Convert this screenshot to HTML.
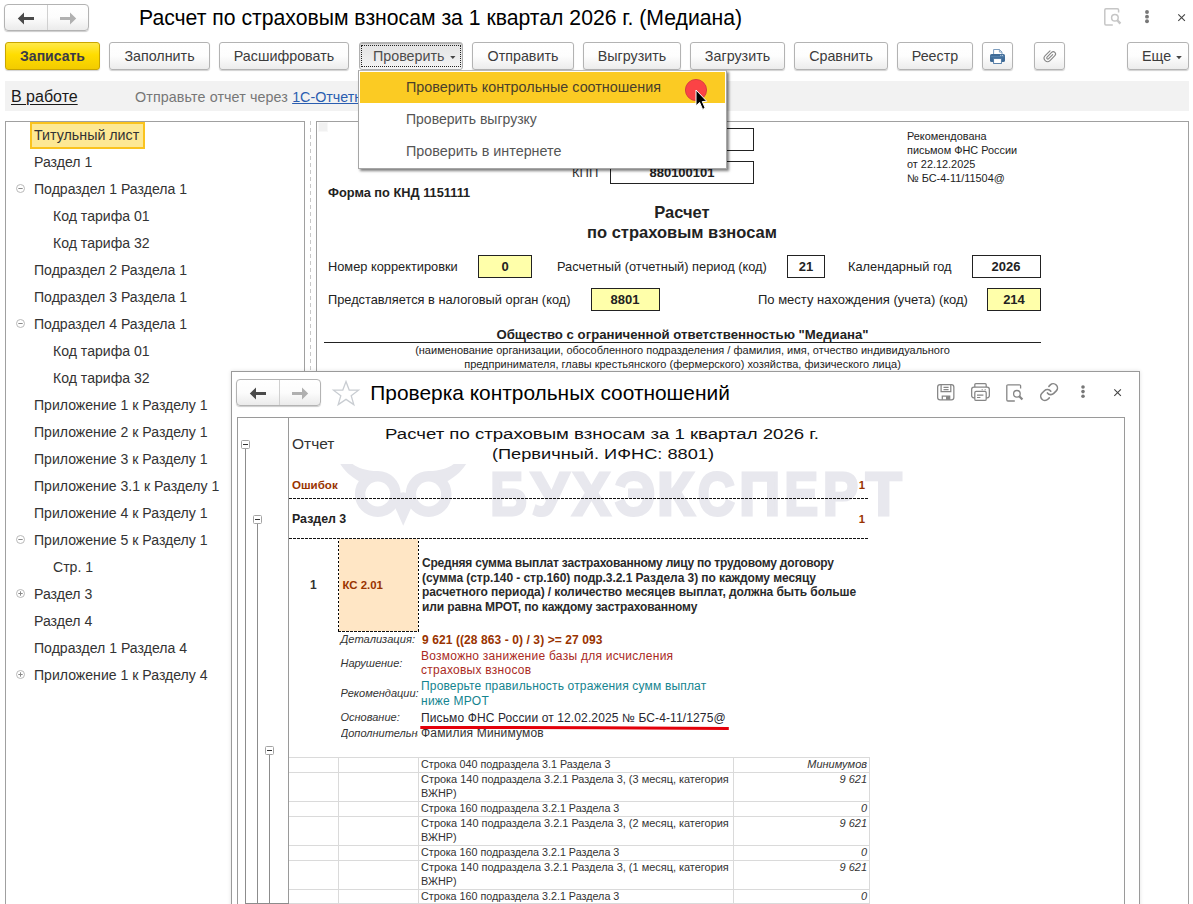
<!DOCTYPE html><html><head><meta charset="utf-8"><title>1C</title><style>
*{box-sizing:border-box;margin:0;padding:0}
html,body{width:1193px;height:904px;overflow:hidden;background:#fff}
body{font-family:"Liberation Sans",sans-serif;position:relative;color:#333}
.t{position:absolute;white-space:nowrap}
.btn{position:absolute;border:1px solid #b3b3b3;border-radius:3px;background:linear-gradient(#ffffff 0%,#fdfdfd 50%,#ececec 100%);box-shadow:0 1px 1px rgba(0,0,0,.18)}
.btn span{position:absolute;left:0;right:0;text-align:center;white-space:nowrap;font-size:14.3px;color:#3c3c3c}
svg{position:absolute;overflow:visible}
</style></head><body>
<div style="position:absolute;left:4px;top:4px;width:85px;height:27px;border:1px solid #b3b3b3;border-radius:4px;background:linear-gradient(#fff 0%,#fcfcfc 50%,#ebebeb 100%);box-shadow:0 1px 1px rgba(0,0,0,.2);"></div>
<div style="position:absolute;left:47px;top:5px;width:1px;height:25px;background:#d0d0d0;"></div>
<svg style="left:17px;top:11.6px" width="18" height="13" viewBox="0 0 18 13"><path d="M7 0.5 L0.8 6.5 L7 12.5 L7 8 L17 8 L17 5 L7 5 Z" fill="#4a4a4a"/></svg>
<svg style="left:59px;top:11.6px" width="18" height="13" viewBox="0 0 18 13"><path d="M11 0.5 L17.2 6.5 L11 12.5 L11 8 L1 8 L1 5 L11 5 Z" fill="#b0b0b0"/></svg>
<div class="t" style="top:3.65px;font-size:21.2px;line-height:28px;color:#000;left:139px;">Расчет по страховым взносам за 1 квартал 2026 г. (Медиана)</div>
<svg style="left:1104px;top:8.1px" width="18" height="18" viewBox="0 0 18 18" fill="none" stroke="#c6c6c6" stroke-width="1.5"><path d="M14.6 4.4 V2 Q14.6 0.8 13.4 0.8 H2 Q0.8 0.8 0.8 2 V15.8 Q0.8 17 2 17 H8.8"/><circle cx="10.9" cy="9.8" r="3.3"/><path d="M13.3 12.3 L16.4 15.6" stroke-width="2.4"/></svg>
<svg style="left:1143.9px;top:9.2px" width="6" height="16" viewBox="0 0 6 16" fill="#777"><circle cx="3" cy="3" r="1.95"/><circle cx="3" cy="7.65" r="1.95"/><circle cx="3" cy="12.3" r="1.95"/></svg>
<svg style="left:1177.9px;top:14.000000000000002px" width="7.2" height="7.2" viewBox="0 0 7.2 7.2" stroke="#444" stroke-width="1.1"><path d="M0.3 0.3 L6.9 6.9 M6.9 0.3 L0.3 6.9"/></svg>
<div class="btn" style="left:5px;top:42px;width:95px;height:28px;background:linear-gradient(#ffe94a 0%,#ffdd00 45%,#f2cb00 100%);border-color:#c9a500;"><span style="top:5px;line-height:17px;font-weight:bold;font-size:14px;color:#3a3a48;">Записать</span></div>
<div class="btn" style="left:109px;top:42px;width:101px;height:28px;"><span style="top:5px;line-height:17px;">Заполнить</span></div>
<div class="btn" style="left:219px;top:42px;width:130px;height:28px;"><span style="top:5px;line-height:17px;">Расшифровать</span></div>
<div class="btn" style="left:359px;top:42px;width:104px;height:28px;background:linear-gradient(#e2e2e2,#f4f4f4);border-color:#b0b0b0;box-shadow:inset 0 1px 1px rgba(0,0,0,.22)"><div style="position:absolute;left:1px;top:2px;right:1px;bottom:2px;border:1px dotted #222"></div><span style="top:5px;line-height:17px;left:13px;right:auto;text-align:left;color:#4d4d4d">Проверить</span></div>
<svg style="left:450.2px;top:56px" width="5.6" height="3" viewBox="0 0 7 4"><path d="M0 0 H7 L3.5 4 Z" fill="#444"/></svg>
<div class="btn" style="left:472px;top:42px;width:102px;height:28px;"><span style="top:5px;line-height:17px;">Отправить</span></div>
<div class="btn" style="left:583px;top:42px;width:98px;height:28px;"><span style="top:5px;line-height:17px;">Выгрузить</span></div>
<div class="btn" style="left:690px;top:42px;width:95px;height:28px;"><span style="top:5px;line-height:17px;">Загрузить</span></div>
<div class="btn" style="left:794px;top:42px;width:94px;height:28px;"><span style="top:5px;line-height:17px;">Сравнить</span></div>
<div class="btn" style="left:897px;top:42px;width:76px;height:28px;"><span style="top:5px;line-height:17px;">Реестр</span></div>
<div class="btn" style="left:982px;top:42px;width:31px;height:28px;"></div>
<div class="btn" style="left:1034px;top:42px;width:31px;height:28px;"></div>
<div class="btn" style="left:1127px;top:42px;width:62px;height:28px"><span style="top:5px;line-height:17px;left:14px;right:auto;text-align:left">Еще</span></div>
<svg style="left:1176px;top:55.5px" width="6" height="3.2" viewBox="0 0 7 4"><path d="M0 0 H7 L3.5 4 Z" fill="#444"/></svg>
<svg style="left:990px;top:49px" width="15" height="15" viewBox="0 0 15 15"><path d="M3.6 5.5 V0.5 H9.4 L12 3.1 V5.5 Z" fill="#fff" stroke="#6f93b8" stroke-width="0.9"/><path d="M9.4 0.5 V3.1 H12" fill="none" stroke="#6f93b8" stroke-width="0.8"/><rect x="0" y="5" width="15" height="8" rx="1.6" fill="#3f6b97"/><rect x="0.6" y="7.3" width="13.8" height="0.9" fill="#5c88b4"/><rect x="3.6" y="9.6" width="7.8" height="4.9" fill="#fff" stroke="#4a76a2" stroke-width="0.9"/><rect x="10.3" y="5.9" width="1" height="1" fill="#c9d9ea"/><rect x="12.1" y="5.9" width="1" height="1" fill="#c9d9ea"/></svg>
<svg style="left:1041px;top:47px" width="18" height="18" viewBox="0 0 18 18" fill="none" stroke="#868686" stroke-width="1.45" stroke-linecap="round"><g transform="translate(8.6 9.1) rotate(45) scale(-0.76 0.76) translate(-6 -8.25)"><path d="M4.5 4 V11.5 a1.5 1.5 0 0 0 3 0 V3 a3 3 0 0 0 -6 0 V12 a4.5 4.5 0 0 0 9 0 V3"/></g></svg>
<div style="position:absolute;left:5px;top:81px;width:1184px;height:30px;background:#f2f2f2;"></div>
<div class="t" style="top:85.96px;font-size:16px;line-height:21px;color:#1a1a1a;left:11px;text-decoration:underline;text-underline-offset:2px;">В работе</div>
<div class="t" style="top:87.55px;font-size:14.3px;line-height:19px;color:#777;letter-spacing:0.11px;left:135px;">Отправьте отчет через <span style="color:#2a5db0;text-decoration:underline;letter-spacing:0">1С-Отчетность</span></div>
<div style="position:absolute;left:5px;top:121px;width:300px;height:800px;border:1px solid #a0a0a0;background:#fff;"></div>
<div style="position:absolute;left:30px;top:122px;width:115px;height:27px;background:#fde894;border:2px solid #fac31e;"></div>
<div class="t" style="top:125.56px;font-size:14.25px;line-height:19px;color:#333;left:34px;">Титульный лист</div>
<div class="t" style="top:153.12px;font-size:14.08px;line-height:18px;color:#333;left:34px;">Раздел 1</div>
<div class="t" style="top:180.12px;font-size:14.08px;line-height:18px;color:#333;left:34px;">Подраздел 1 Раздела 1</div>
<svg style="left:16px;top:184.0px" width="9" height="9" viewBox="0 0 9 9" fill="none"><circle cx="4.5" cy="4.5" r="4" stroke="#b9b9b9" stroke-width="1"/><path d="M2.3 4.5 H6.7" stroke="#8a8a8a" stroke-width="1"/></svg>
<div class="t" style="top:207.12px;font-size:14.08px;line-height:18px;color:#333;left:53px;">Код тарифа 01</div>
<div class="t" style="top:234.12px;font-size:14.08px;line-height:18px;color:#333;left:53px;">Код тарифа 32</div>
<div class="t" style="top:261.12px;font-size:14.08px;line-height:18px;color:#333;left:34px;">Подраздел 2 Раздела 1</div>
<div class="t" style="top:288.12px;font-size:14.08px;line-height:18px;color:#333;left:34px;">Подраздел 3 Раздела 1</div>
<div class="t" style="top:315.12px;font-size:14.08px;line-height:18px;color:#333;left:34px;">Подраздел 4 Раздела 1</div>
<svg style="left:16px;top:319.0px" width="9" height="9" viewBox="0 0 9 9" fill="none"><circle cx="4.5" cy="4.5" r="4" stroke="#b9b9b9" stroke-width="1"/><path d="M2.3 4.5 H6.7" stroke="#8a8a8a" stroke-width="1"/></svg>
<div class="t" style="top:342.12px;font-size:14.08px;line-height:18px;color:#333;left:53px;">Код тарифа 01</div>
<div class="t" style="top:369.12px;font-size:14.08px;line-height:18px;color:#333;left:53px;">Код тарифа 32</div>
<div class="t" style="top:396.12px;font-size:14.08px;line-height:18px;color:#333;left:34px;">Приложение 1 к Разделу 1</div>
<div class="t" style="top:423.12px;font-size:14.08px;line-height:18px;color:#333;left:34px;">Приложение 2 к Разделу 1</div>
<div class="t" style="top:450.12px;font-size:14.08px;line-height:18px;color:#333;left:34px;">Приложение 3 к Разделу 1</div>
<div class="t" style="top:477.12px;font-size:14.08px;line-height:18px;color:#333;left:34px;">Приложение 3.1 к Разделу 1</div>
<div class="t" style="top:504.12px;font-size:14.08px;line-height:18px;color:#333;left:34px;">Приложение 4 к Разделу 1</div>
<div class="t" style="top:531.12px;font-size:14.08px;line-height:18px;color:#333;left:34px;">Приложение 5 к Разделу 1</div>
<svg style="left:16px;top:535.0px" width="9" height="9" viewBox="0 0 9 9" fill="none"><circle cx="4.5" cy="4.5" r="4" stroke="#b9b9b9" stroke-width="1"/><path d="M2.3 4.5 H6.7" stroke="#8a8a8a" stroke-width="1"/></svg>
<div class="t" style="top:558.12px;font-size:14.08px;line-height:18px;color:#333;left:53px;">Стр. 1</div>
<div class="t" style="top:585.12px;font-size:14.08px;line-height:18px;color:#333;left:34px;">Раздел 3</div>
<svg style="left:16px;top:589.0px" width="9" height="9" viewBox="0 0 9 9" fill="none"><circle cx="4.5" cy="4.5" r="4" stroke="#b9b9b9" stroke-width="1"/><path d="M2.3 4.5 H6.7 M4.5 2.3 V6.7" stroke="#8a8a8a" stroke-width="1"/></svg>
<div class="t" style="top:612.12px;font-size:14.08px;line-height:18px;color:#333;left:34px;">Раздел 4</div>
<div class="t" style="top:639.12px;font-size:14.08px;line-height:18px;color:#333;left:34px;">Подраздел 1 Раздела 4</div>
<div class="t" style="top:666.12px;font-size:14.08px;line-height:18px;color:#333;left:34px;">Приложение 1 к Разделу 4</div>
<svg style="left:16px;top:670.0px" width="9" height="9" viewBox="0 0 9 9" fill="none"><circle cx="4.5" cy="4.5" r="4" stroke="#b9b9b9" stroke-width="1"/><path d="M2.3 4.5 H6.7 M4.5 2.3 V6.7" stroke="#8a8a8a" stroke-width="1"/></svg>
<div style="position:absolute;left:310px;top:121px;width:1px;height:800px;background:repeating-linear-gradient(#c8c8c8 0 4px,#fff 4px 7px);"></div>
<div style="position:absolute;left:316px;top:121px;width:873px;height:800px;border:1px solid #a0a0a0;background:#fff;"></div>
<div style="position:absolute;left:318px;top:122px;width:10px;height:10px;background:#f1f1f1;border:1px solid #f8f8f8;"></div>
<div style="position:absolute;left:600px;top:128px;width:154px;height:23px;border:1px solid #222;"></div>
<div style="position:absolute;left:610px;top:161px;width:144px;height:23px;border:1px solid #222;"></div>
<div class="t" style="top:164.00px;font-size:13px;line-height:17px;color:#333;left:572px;">КПП</div>
<div class="t" style="top:164.00px;font-size:13px;line-height:17px;color:#222;font-weight:bold;left:182px;width:1000px;text-align:center;">880100101</div>
<div class="t" style="top:129.22px;font-size:10.9px;line-height:14px;color:#222;left:907px;">Рекомендована</div>
<div class="t" style="top:143.22px;font-size:10.9px;line-height:14px;color:#222;left:907px;">письмом ФНС России</div>
<div class="t" style="top:157.22px;font-size:10.9px;line-height:14px;color:#222;left:907px;">от 22.12.2025</div>
<div class="t" style="top:171.22px;font-size:10.9px;line-height:14px;color:#222;left:907px;">№ БС-4-11/11504@</div>
<div class="t" style="top:183.56px;font-size:12.8px;line-height:17px;color:#222;font-weight:bold;left:328px;">Форма по КНД 1151111</div>
<div class="t" style="top:201.78px;font-size:16.5px;line-height:21px;color:#222;font-weight:bold;left:182px;width:1000px;text-align:center;">Расчет</div>
<div class="t" style="top:221.78px;font-size:16.5px;line-height:21px;color:#222;font-weight:bold;left:182px;width:1000px;text-align:center;">по страховым взносам</div>
<div class="t" style="top:258.06px;font-size:12.8px;line-height:17px;color:#222;left:328px;">Номер корректировки</div>
<div style="position:absolute;left:478px;top:255px;width:54px;height:23px;border:1px solid #222;background:#ffffaa;"></div>
<div class="t" style="top:258.00px;font-size:13px;line-height:17px;color:#222;font-weight:bold;left:5px;width:1000px;text-align:center;">0</div>
<div class="t" style="top:258.06px;font-size:12.8px;line-height:17px;color:#222;left:557px;">Расчетный (отчетный) период (код)</div>
<div style="position:absolute;left:787px;top:255px;width:38px;height:23px;border:1px solid #222;"></div>
<div class="t" style="top:258.00px;font-size:13px;line-height:17px;color:#222;font-weight:bold;left:306px;width:1000px;text-align:center;">21</div>
<div class="t" style="top:258.06px;font-size:12.8px;line-height:17px;color:#222;left:848px;">Календарный год</div>
<div style="position:absolute;left:972px;top:255px;width:69px;height:23px;border:1px solid #222;"></div>
<div class="t" style="top:258.00px;font-size:13px;line-height:17px;color:#222;font-weight:bold;left:506px;width:1000px;text-align:center;">2026</div>
<div class="t" style="top:291.06px;font-size:12.8px;line-height:17px;color:#222;left:328px;">Представляется в налоговый орган (код)</div>
<div style="position:absolute;left:591px;top:288px;width:69px;height:23px;border:1px solid #222;background:#ffffaa;"></div>
<div class="t" style="top:291.00px;font-size:13px;line-height:17px;color:#222;font-weight:bold;left:125px;width:1000px;text-align:center;">8801</div>
<div class="t" style="top:291.00px;font-size:13.0px;line-height:17px;color:#222;left:758px;">По месту нахождения (учета) (код)</div>
<div style="position:absolute;left:987px;top:288px;width:54px;height:23px;border:1px solid #222;background:#ffffaa;"></div>
<div class="t" style="top:291.00px;font-size:13px;line-height:17px;color:#222;font-weight:bold;left:514px;width:1000px;text-align:center;">214</div>
<div class="t" style="top:325.93px;font-size:13.2px;line-height:17px;color:#222;font-weight:bold;left:182.5px;width:1000px;text-align:center;">Общество с ограниченной ответственностью "Медиана"</div>
<div style="position:absolute;left:324px;top:342px;width:717px;height:1px;background:#222;"></div>
<div class="t" style="top:343.19px;font-size:11px;line-height:14px;color:#222;left:182.5px;width:1000px;text-align:center;">(наименование организации, обособленного подразделения / фамилия, имя, отчество индивидуального</div>
<div class="t" style="top:357.19px;font-size:11px;line-height:14px;color:#222;left:182.5px;width:1000px;text-align:center;">предпринимателя, главы крестьянского (фермерского) хозяйства, физического лица)</div>
<div style="position:absolute;left:231px;top:371px;width:909px;height:560px;border:1px solid #9a9a9a;background:#fff;box-shadow:0 0 4px rgba(0,0,0,.12);"></div>
<div style="position:absolute;left:236px;top:379px;width:85px;height:27px;border:1px solid #b3b3b3;border-radius:4px;background:linear-gradient(#fff 0%,#fcfcfc 50%,#ebebeb 100%);box-shadow:0 1px 1px rgba(0,0,0,.2);"></div>
<div style="position:absolute;left:279px;top:380px;width:1px;height:25px;background:#d0d0d0;"></div>
<svg style="left:249px;top:386.6px" width="18" height="13" viewBox="0 0 18 13"><path d="M7 0.5 L0.8 6.5 L7 12.5 L7 8 L17 8 L17 5 L7 5 Z" fill="#4a4a4a"/></svg>
<svg style="left:291px;top:386.6px" width="18" height="13" viewBox="0 0 18 13"><path d="M11 0.5 L17.2 6.5 L11 12.5 L11 8 L1 8 L1 5 L11 5 Z" fill="#b0b0b0"/></svg>
<svg style="left:332px;top:380px" width="28" height="26" viewBox="0 0 28 26" fill="none" stroke="#c9cdd2" stroke-width="1.3" stroke-linejoin="miter"><path d="M14 1.5 L17.2 10 L26.5 10.2 L19.2 15.8 L21.8 24.6 L14 19.4 L6.2 24.6 L8.8 15.8 L1.5 10.2 L10.8 10 Z"/></svg>
<div class="t" style="top:379.26px;font-size:20.9px;line-height:27px;color:#000;left:370.3px;">Проверка контрольных соотношений</div>
<svg style="left:937px;top:383.8px" width="17.5" height="16.6" viewBox="0 0 17.5 16.6" fill="none" stroke="#868686" stroke-width="1.25"><rect x="0.65" y="0.65" width="16.2" height="15.2" rx="2.4"/><path d="M4.1 0.65 V7.6 H13.8 V0.65 M6.5 3.4 H11.6 M6.5 5.6 H11.6" /><path d="M5.3 15.85 V12.2 H12.7 V15.85"/><rect x="9" y="12.2" width="3.7" height="3.6" fill="#868686" stroke="none"/></svg>
<svg style="left:971.4px;top:382.9px" width="19" height="18.2" viewBox="0 0 19 18.2" fill="none" stroke="#868686" stroke-width="1.25"><path d="M3.8 4.2 V1.7 Q3.8 0.65 4.8 0.65 H14.2 Q15.2 0.65 15.2 1.7 V4.2"/><rect x="0.65" y="4.2" width="17.7" height="10.6" rx="2.2"/><rect x="3.8" y="8.5" width="11.4" height="9" rx="1.3" fill="#fff"/><path d="M6 12.1 H12.4 M6 14.5 H9.4 M10.6 6.7 H11.8 M13.6 6.7 H14.8" stroke-width="1.1"/></svg>
<svg style="left:1005.8px;top:383.6px" width="18" height="18" viewBox="0 0 18 18" fill="none" stroke="#868686" stroke-width="1.3"><path d="M14.6 4.4 V2 Q14.6 0.8 13.4 0.8 H2 Q0.8 0.8 0.8 2 V15.8 Q0.8 17 2 17 H8.8"/><circle cx="10.9" cy="9.8" r="3.3"/><path d="M13.3 12.3 L16.4 15.6" stroke-width="2.2"/></svg>
<svg style="left:1039px;top:381.6px" width="20.2" height="20.2" viewBox="0 0 24 24" fill="none" stroke="#868686" stroke-width="1.85" stroke-linecap="round" stroke-linejoin="round"><path d="M10 13a5 5 0 0 0 7.54.54l3-3a5 5 0 0 0-7.07-7.07l-1.72 1.71"/><path d="M14 11a5 5 0 0 0-7.54-.54l-3 3a5 5 0 0 0 7.07 7.07l1.71-1.71"/></svg>
<svg style="left:1079.5px;top:383.9px" width="6" height="16" viewBox="0 0 6 16" fill="#777"><circle cx="3" cy="3" r="1.8"/><circle cx="3" cy="7.6" r="1.8"/><circle cx="3" cy="12.2" r="1.8"/></svg>
<svg style="left:1113.9px;top:389.0px" width="7.2" height="7.2" viewBox="0 0 7.2 7.2" stroke="#444" stroke-width="1.1"><path d="M0.3 0.3 L6.9 6.9 M6.9 0.3 L0.3 6.9"/></svg>
<div style="position:absolute;left:237px;top:417px;width:888px;height:520px;border:1px solid #9a9a9a;background:#fff;"></div>
<div style="position:absolute;left:288px;top:418px;width:1px;height:520px;background:#9a9a9a;"></div>
<svg style="left:336px;top:460px" width="135" height="70" viewBox="336 460 135 70"><g fill="none" stroke="#e8e8ee" stroke-width="10.4"><circle cx="377.8" cy="494" r="17.7"/><circle cx="428.6" cy="494" r="17.7"/></g><g fill="#e8e8ee"><path d="M340.3 464 L352.6 464 C358 468 366 471 378 471.1 L378 477 L358.5 481 C350 476 344 470 340.3 464 Z"/><path d="M466.1 464 L453.8 464 C448.4 468 440.4 471 428.4 471.1 L428.4 477 L447.9 481 C456.4 476 462.4 470 466.1 464 Z"/><path d="M397 493.6 L403.2 492.3 L409.4 493.6 L412.4 505 L403.2 525.8 L394 505 Z"/></g></svg>
<svg style="left:480px;top:460px" width="440" height="70" viewBox="480 460 440 70"><g font-family="Liberation Sans" font-weight="bold" font-size="60" fill="#e8e8ee" stroke="#e8e8ee" stroke-width="3.0" stroke-linejoin="miter"><text transform="translate(492.40 514.87) scale(0.8500 1.0181) translate(-2.50 0)">Б</text><text transform="translate(530.20 514.87) scale(0.9926 1.0181) translate(1.40 0)">У</text><text transform="translate(571.60 514.87) scale(0.9451 1.0181) translate(0.90 0)">Х</text><text transform="translate(615.10 514.87) scale(0.9423 1.0181) translate(-0.10 0)">Э</text><text transform="translate(659.60 514.87) scale(1.0112 1.0181) translate(-2.50 0)">К</text><text transform="translate(698.50 514.87) scale(0.8555 1.0181) translate(-1.00 0)">С</text><text transform="translate(741.60 514.87) scale(0.9475 1.0181) translate(-2.50 0)">П</text><text transform="translate(786.50 514.87) scale(0.8392 1.0181) translate(-2.50 0)">Е</text><text transform="translate(825.30 514.87) scale(0.8784 1.0181) translate(-2.50 0)">Р</text><text transform="translate(864.90 514.87) scale(0.9791 1.0181) translate(0.80 0)">Т</text></g></svg>
<div style="position:absolute;left:245px;top:448px;width:1px;height:500px;background:#8c8c8c;"></div>
<div style="position:absolute;left:257px;top:523px;width:1px;height:400px;background:#8c8c8c;"></div>
<div style="position:absolute;left:269px;top:754px;width:1px;height:200px;background:#8c8c8c;"></div>
<div style="position:absolute;left:245px;top:903px;width:44px;height:1px;background:#8c8c8c;"></div>
<div style="position:absolute;left:241px;top:440px;width:9px;height:9px;border:1px solid #a4a4a4;border-radius:1.5px;background:#fff;"></div>
<div style="position:absolute;left:243px;top:444px;width:5px;height:1px;background:#333;"></div>
<div style="position:absolute;left:253px;top:515px;width:9px;height:9px;border:1px solid #a4a4a4;border-radius:1.5px;background:#fff;"></div>
<div style="position:absolute;left:255px;top:519px;width:5px;height:1px;background:#333;"></div>
<div style="position:absolute;left:265px;top:745.5px;width:9px;height:9px;border:1px solid #a4a4a4;border-radius:1.5px;background:#fff;"></div>
<div style="position:absolute;left:267px;top:749.5px;width:5px;height:1px;background:#333;"></div>
<div class="t" style="top:434.13px;font-size:15.5px;line-height:20px;color:#333;left:292px;">Отчет</div>
<div class="t" style="top:424.20px;font-size:15.3px;line-height:20px;color:#111;left:101.5px;width:1000px;text-align:center;transform:scaleX(1.2155);">Расчет по страховым взносам за 1 квартал 2026 г.</div>
<div class="t" style="top:444.20px;font-size:15.3px;line-height:20px;color:#111;left:103px;width:1000px;text-align:center;transform:scaleX(1.19);">(Первичный. ИФНС: 8801)</div>
<div class="t" style="top:477.50px;font-size:11.55px;line-height:15px;color:#993300;font-weight:bold;left:292px;">Ошибок</div>
<div class="t" style="top:477.58px;font-size:11.3px;line-height:15px;color:#993300;font-weight:bold;right:328px;text-align:right;">1</div>
<div style="position:absolute;left:289px;top:498px;width:580px;height:1px;background:repeating-linear-gradient(90deg,#111 0 3px,transparent 3px 4px);"></div>
<div class="t" style="top:510.70px;font-size:12.4px;line-height:16px;color:#222;font-weight:bold;left:292px;">Раздел 3</div>
<div class="t" style="top:511.58px;font-size:11.3px;line-height:15px;color:#993300;font-weight:bold;right:328px;text-align:right;">1</div>
<div style="position:absolute;left:289px;top:538px;width:580px;height:1px;background:repeating-linear-gradient(90deg,#111 0 3px,transparent 3px 4px);"></div>
<div style="position:absolute;left:339px;top:539px;width:79px;height:92px;background:#ffe6c5;"></div>
<div style="position:absolute;left:338px;top:539px;width:1px;height:92px;background:repeating-linear-gradient(#000 0 2px,transparent 2px 4px);background-position:0 2px;"></div>
<div style="position:absolute;left:418px;top:539px;width:1px;height:92px;background:repeating-linear-gradient(#000 0 2px,transparent 2px 4px);background-position:0 2px;"></div>
<div style="position:absolute;left:338px;top:631px;width:81px;height:1px;background:repeating-linear-gradient(90deg,#111 0 3px,transparent 3px 4px);"></div>
<div class="t" style="top:576.84px;font-size:12px;line-height:16px;color:#333;font-weight:bold;left:310px;">1</div>
<div class="t" style="top:577.55px;font-size:11.4px;line-height:15px;color:#993300;font-weight:bold;left:342.5px;">КС 2.01</div>
<div class="t" style="top:554.84px;font-size:12px;line-height:16px;color:#2a2a2a;font-weight:bold;letter-spacing:-0.2px;left:422px;">Средняя сумма выплат застрахованному лицу по трудовому договору</div>
<div class="t" style="top:569.54px;font-size:12px;line-height:16px;color:#2a2a2a;font-weight:bold;letter-spacing:-0.065px;left:422px;">(сумма (стр.140 - стр.160) подр.3.2.1 Раздела 3) по каждому месяцу</div>
<div class="t" style="top:584.24px;font-size:12px;line-height:16px;color:#2a2a2a;font-weight:bold;letter-spacing:-0.07px;left:422px;">расчетного периода) / количество месяцев выплат, должна быть больше</div>
<div class="t" style="top:598.94px;font-size:12px;line-height:16px;color:#2a2a2a;font-weight:bold;letter-spacing:-0.13px;left:422px;">или равна МРОТ, по каждому застрахованному</div>
<div class="t" style="top:632.14px;font-size:11.15px;line-height:14px;color:#333;font-style:italic;left:340.5px;">Детализация:</div>
<div class="t" style="top:631.84px;font-size:12px;line-height:16px;color:#993300;font-weight:bold;letter-spacing:0.09px;left:422px;">9 621 ((28 863 - 0) / 3) &gt;= 27 093</div>
<div class="t" style="top:655.69px;font-size:11px;line-height:14px;color:#333;font-style:italic;left:340.5px;">Нарушение:</div>
<div class="t" style="top:647.84px;font-size:12px;line-height:16px;color:#aa2a1e;letter-spacing:0.26px;left:421px;">Возможно занижение базы для исчисления</div>
<div class="t" style="top:662.34px;font-size:12px;line-height:16px;color:#aa2a1e;letter-spacing:0.26px;left:421px;">страховых взносов</div>
<div class="t" style="top:686.19px;font-size:11px;line-height:14px;color:#333;font-style:italic;left:340.5px;width:78px;overflow:hidden;">Рекомендации:</div>
<div class="t" style="top:678.34px;font-size:12px;line-height:16px;color:#14848f;letter-spacing:0.165px;left:421px;">Проверьте правильность отражения сумм выплат</div>
<div class="t" style="top:693.34px;font-size:12px;line-height:16px;color:#14848f;letter-spacing:0.25px;left:421px;">ниже МРОТ</div>
<div class="t" style="top:709.69px;font-size:11px;line-height:14px;color:#333;font-style:italic;left:340.5px;">Основание:</div>
<div class="t" style="top:709.84px;font-size:12px;line-height:16px;color:#262630;letter-spacing:0.12px;left:421px;">Письмо ФНС России от 12.02.2025 № БС-4-11/1275@</div>
<div class="t" style="top:725.69px;font-size:11px;line-height:14px;color:#333;font-style:italic;left:340.5px;width:77px;overflow:hidden;">Дополнительная</div>
<div class="t" style="top:724.84px;font-size:12px;line-height:16px;color:#333;letter-spacing:0.18px;left:421px;">Фамилия Минимумов</div>
<svg style="left:418px;top:722px" width="314" height="10" viewBox="418 722 314 10" fill="none" stroke="#e4000a" stroke-width="3"><path d="M420.3 727.6 Q560 727.2 640 727.9 T728.8 728.5"/></svg>
<div style="position:absolute;left:289px;top:757px;width:581px;height:1px;background:#dadada;"></div>
<div style="position:absolute;left:289px;top:772px;width:581px;height:1px;background:#dadada;"></div>
<div style="position:absolute;left:289px;top:801px;width:581px;height:1px;background:#dadada;"></div>
<div style="position:absolute;left:289px;top:816px;width:581px;height:1px;background:#dadada;"></div>
<div style="position:absolute;left:289px;top:845px;width:581px;height:1px;background:#dadada;"></div>
<div style="position:absolute;left:289px;top:860px;width:581px;height:1px;background:#dadada;"></div>
<div style="position:absolute;left:289px;top:889px;width:581px;height:1px;background:#dadada;"></div>
<div style="position:absolute;left:289px;top:903px;width:581px;height:1px;background:#dadada;"></div>
<div style="position:absolute;left:338px;top:757px;width:1px;height:160px;background:#dadada;"></div>
<div style="position:absolute;left:418px;top:757px;width:1px;height:160px;background:#dadada;"></div>
<div style="position:absolute;left:733px;top:757px;width:1px;height:160px;background:#dadada;"></div>
<div style="position:absolute;left:869px;top:757px;width:1px;height:160px;background:#dadada;"></div>
<div class="t" style="top:756.78px;font-size:10.75px;line-height:14px;color:#333;left:421px;">Строка 040 подраздела 3.1 Раздела 3</div>
<div class="t" style="top:756.69px;font-size:11px;line-height:14px;color:#333;font-style:italic;right:326px;text-align:right;">Минимумов</div>
<div class="t" style="top:771.71px;font-size:10.95px;line-height:14px;color:#333;left:421px;">Строка 140 подраздела 3.2.1 Раздела 3, (3 месяц, категория</div>
<div class="t" style="top:785.74px;font-size:10.85px;line-height:14px;color:#333;left:421px;">ВЖНР)</div>
<div class="t" style="top:771.69px;font-size:11px;line-height:14px;color:#333;font-style:italic;right:326px;text-align:right;">9 621</div>
<div class="t" style="top:800.78px;font-size:10.75px;line-height:14px;color:#333;left:421px;">Строка 160 подраздела 3.2.1 Раздела 3</div>
<div class="t" style="top:800.69px;font-size:11px;line-height:14px;color:#333;font-style:italic;right:326px;text-align:right;">0</div>
<div class="t" style="top:815.71px;font-size:10.95px;line-height:14px;color:#333;left:421px;">Строка 140 подраздела 3.2.1 Раздела 3, (2 месяц, категория</div>
<div class="t" style="top:829.74px;font-size:10.85px;line-height:14px;color:#333;left:421px;">ВЖНР)</div>
<div class="t" style="top:815.69px;font-size:11px;line-height:14px;color:#333;font-style:italic;right:326px;text-align:right;">9 621</div>
<div class="t" style="top:844.78px;font-size:10.75px;line-height:14px;color:#333;left:421px;">Строка 160 подраздела 3.2.1 Раздела 3</div>
<div class="t" style="top:844.69px;font-size:11px;line-height:14px;color:#333;font-style:italic;right:326px;text-align:right;">0</div>
<div class="t" style="top:859.71px;font-size:10.95px;line-height:14px;color:#333;left:421px;">Строка 140 подраздела 3.2.1 Раздела 3, (1 месяц, категория</div>
<div class="t" style="top:873.74px;font-size:10.85px;line-height:14px;color:#333;left:421px;">ВЖНР)</div>
<div class="t" style="top:859.69px;font-size:11px;line-height:14px;color:#333;font-style:italic;right:326px;text-align:right;">9 621</div>
<div class="t" style="top:888.78px;font-size:10.75px;line-height:14px;color:#333;left:421px;">Строка 160 подраздела 3.2.1 Раздела 3</div>
<div class="t" style="top:888.69px;font-size:11px;line-height:14px;color:#333;font-style:italic;right:326px;text-align:right;">0</div>
<div style="position:absolute;left:358px;top:70px;width:369px;height:99px;background:#fff;border:1px solid #a6a6a6;border-top:1px solid #b8b8b8;box-shadow:1.5px 2px 2.5px rgba(0,0,0,.5);"></div>
<div style="position:absolute;left:360px;top:72px;width:365px;height:31px;background:#fbcb23;"></div>
<div class="t" style="top:77.53px;font-size:14.35px;line-height:19px;color:#4a3f2a;left:406px;">Проверить контрольные соотношения</div>
<div class="t" style="top:110.15px;font-size:14.0px;line-height:18px;color:#555;left:406px;">Проверить выгрузку</div>
<div class="t" style="top:141.53px;font-size:14.35px;line-height:19px;color:#555;left:406px;">Проверить в интернете</div>
<svg style="left:684px;top:78px" width="24" height="24" viewBox="0 0 24 24"><circle cx="12" cy="12" r="10.6" fill="#fb4345" stroke="#d23b40" stroke-width="0.9"/></svg>
<svg style="left:696.2px;top:89.6px" width="13" height="22" viewBox="0 0 13 22"><path d="M0 0 L0 15.8 L3.6 12.4 L6.6 19.4 L9.2 18.2 L6.3 11.5 L10.8 11.3 Z" fill="#000" stroke="#fff" stroke-width="1" stroke-linejoin="round"/></svg>
</body></html>
